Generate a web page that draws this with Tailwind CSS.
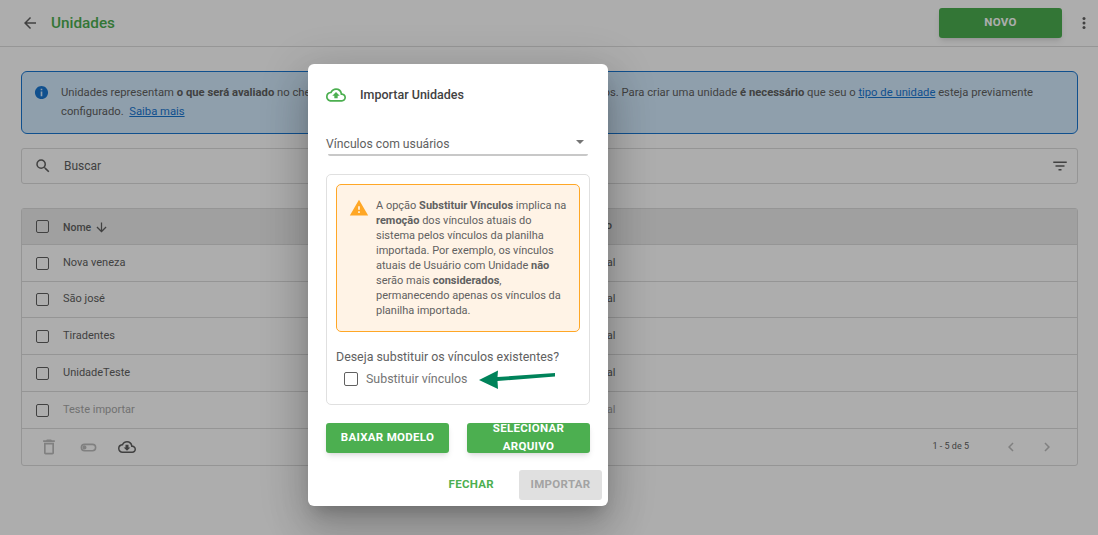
<!DOCTYPE html>
<html lang="pt-BR">
<head>
    <meta charset="UTF-8">
    <title>Unidades</title>
    <script src="https://cdn.jsdelivr.net/npm/@tailwindcss/browser@4"></script>
</head>
<body class="bg-white overflow-hidden font-['Roboto',sans-serif]">
<div class="relative w-[1098px] h-[535px] overflow-hidden">
    <!-- pagina -->
    <div class="h-[47px] border-b border-[#dedede] flex items-center pl-[21px] pr-[6px]">
        <svg class="w-[18px] h-[18px] text-[#616161]" viewBox="0 0 24 24" fill="currentColor"><path d="M20 11H7.830l5.590-5.590L12 4l-8 8 8 8 1.410-1.410L7.830 13H20v-2z"/></svg>
        <h1 class="ml-[12px] text-[15.300px] font-medium text-[#4caf50]">Unidades</h1>
        <button class="ml-auto w-[123px] h-[30px] bg-[#4caf50] text-white text-[11.500px] font-bold rounded-[3px] shadow-md mb-[1px] tracking-[.3px]">NOVO</button>
        <svg class="ml-[14px] w-4 h-4 text-[#616161]" viewBox="0 0 16 16" fill="currentColor"><circle cx="8" cy="3.500" r="1.500"/><circle cx="8" cy="8" r="1.500"/><circle cx="8" cy="12.500" r="1.500"/></svg>
    </div>
    <div class="px-[21px] pr-[20px] pt-[24px]">
        <div class="h-[63px] border border-[#1976d2] bg-[#d3ebfe] rounded-[6px] flex pl-[12px] pt-[11px] text-[11.250px] leading-[19px] text-[#616161]">
            <svg class="w-[15px] h-[15px] mt-[2px] shrink-0 text-[#1976d2]" viewBox="0 0 24 24" fill="currentColor"><path d="M12 1.500C6.200 1.500 1.500 6.200 1.500 12S6.200 22.500 12 22.500 22.500 17.800 22.500 12 17.800 1.500 12 1.500zm1.300 16.500h-2.600v-7.500h2.600V18zm0-9.500h-2.600V6h2.600v2.500z"/></svg>
            <p class="ml-[12px] whitespace-nowrap">Unidades representam <b class="font-bold">o que será avaliado</b> no checklist, como lojas, filiais, regiões, setores e os departamentos. Para criar uma unidade <b class="font-bold">é necessário</b> que seu o <a class="text-[#1976d2] underline">tipo de unidade</a> esteja previamente<br>configurado. &nbsp;<a class="text-[#1976d2] underline">Saiba mais</a></p>
        </div>
        <div class="mt-[14px] h-[36px] border border-[#dcdcdc] rounded-[3px] flex items-center pl-[12px] pr-[8px] text-[#616161]">
            <svg class="w-[18px] h-[18px]" viewBox="0 0 24 24" fill="currentColor"><path d="M15.500 14h-.790l-.280-.270A6.470 6.470 0 0 0 16 9.500 6.500 6.500 0 1 0 9.500 16c1.610 0 3.090-.590 4.230-1.570l.270.280v.790l5 4.990L20.490 19l-4.990-5zm-6 0C7.010 14 5 11.990 5 9.500S7.010 5 9.500 5 14 7.010 14 9.500 11.990 14 9.500 14z"/></svg>
            <span class="ml-[12px] text-[12px]">Buscar</span>
            <svg class="ml-auto w-[18px] h-[18px]" viewBox="0 0 24 24" fill="currentColor"><path d="M10 18h4v-2h-4v2zM3 6v2h18V6H3zm3 7h12v-2H6v2z"/></svg>
        </div>
        <div class="mt-[24px] border border-[#dcdcdc] rounded-[3px] text-[11px] text-[#616161]">
            <div class="h-[36px] bg-[#ececec] flex items-center border-b border-[#dcdcdc] font-medium">
                <span class="ml-[14px] w-[13px] h-[13px] border border-[#616161] rounded-[2px]"></span>
                <span class="ml-[14px] pt-[2px] text-[10.500px] flex items-center">Nome
                    <svg class="ml-[3px] w-[15px] h-[15px]" viewBox="0 0 24 24" fill="currentColor"><path d="M20 12l-1.410-1.410L13 16.170V4h-2v12.170l-5.580-5.590L4 12l8 8 8-8z"/></svg>
                </span>
                <span class="absolute left-[590px]">Tipo</span>
            </div>
            <div class="h-[37px] flex items-center border-b border-[#dcdcdc]">
                <span class="ml-[14px] w-[13px] h-[13px] border border-[#616161] rounded-[2px]"></span>
                <span class="ml-[14px]">Nova veneza</span>
                <span class="absolute left-[590px]">Geral</span>
            </div>
            <div class="h-[36px] flex items-center border-b border-[#dcdcdc]">
                <span class="ml-[14px] w-[13px] h-[13px] border border-[#616161] rounded-[2px]"></span>
                <span class="ml-[14px]">São josé</span>
                <span class="absolute left-[590px]">Geral</span>
            </div>
            <div class="h-[37px] flex items-center border-b border-[#dcdcdc]">
                <span class="ml-[14px] w-[13px] h-[13px] border border-[#616161] rounded-[2px]"></span>
                <span class="ml-[14px]">Tiradentes</span>
                <span class="absolute left-[590px]">Geral</span>
            </div>
            <div class="h-[37px] flex items-center border-b border-[#dcdcdc]">
                <span class="ml-[14px] w-[13px] h-[13px] border border-[#616161] rounded-[2px]"></span>
                <span class="ml-[14px]">UnidadeTeste</span>
                <span class="absolute left-[590px]">Geral</span>
            </div>
            <div class="h-[37px] flex items-center border-b border-[#dcdcdc]">
                <span class="ml-[14px] w-[13px] h-[13px] border border-[#616161] rounded-[2px]"></span>
                <span class="ml-[14px] text-[#a8a8a8]">Teste importar</span>
                <span class="absolute left-[590px] text-[#a8a8a8]">Geral</span>
            </div>
            <div class="h-[36px] flex items-center">
                <svg class="ml-[17px] w-[20px] h-[20px] text-[#bdbdbd]" viewBox="0 0 24 24" fill="currentColor"><path d="M6 19c0 1.100.900 2 2 2h8c1.100 0 2-.900 2-2V7H6v12zM8 9h8v10H8V9zm7.500-5-1-1h-5l-1 1H5v2h14V4h-3.500z"/></svg>
                <svg class="ml-[20px] w-[19px] h-[19px] text-[#bdbdbd]" viewBox="0 0 24 24" fill="currentColor"><path d="M17 7H7a5 5 0 0 0 0 10h10a5 5 0 0 0 0-10zm0 8H7a3 3 0 0 1 0-6h10a3 3 0 0 1 0 6zM7 9.500a2.500 2.500 0 1 0 0 5 2.500 2.500 0 0 0 0-5z"/></svg>
                <svg class="ml-[20px] w-[18px] h-[18px] text-[#616161]" viewBox="0 0 24 24" fill="currentColor"><path d="M19.350 10.040A7.490 7.490 0 0 0 12 4C9.110 4 6.600 5.640 5.350 8.040A5.994 5.994 0 0 0 0 14c0 3.310 2.690 6 6 6h13c2.760 0 5-2.240 5-5 0-2.640-2.050-4.780-4.650-4.960zM19 18H6c-2.210 0-4-1.790-4-4s1.790-4 4-4h.710C7.370 7.690 9.480 6 12 6c3.040 0 5.500 2.460 5.500 5.500v.500H19c1.660 0 3 1.340 3 3s-1.340 3-3 3z"/><path d="M10 9h4v3.500h2.500L12 17l-4.500-4.500H10z"/></svg>
                <span class="ml-auto text-[9px]">1 - 5 de 5</span>
                <svg class="ml-[33px] w-[18px] h-[18px] text-[#bdbdbd]" viewBox="0 0 24 24" fill="currentColor"><path d="M15.410 7.410 14 6l-6 6 6 6 1.410-1.410L10.830 12z"/></svg>
                <svg class="ml-[18px] mr-[21px] w-[18px] h-[18px] text-[#bdbdbd]" viewBox="0 0 24 24" fill="currentColor"><path d="M10 6 8.590 7.410 13.170 12l-4.580 4.590L10 18l6-6z"/></svg>
            </div>
        </div>
    </div>

    <!-- overlay -->
    <div class="absolute inset-0 bg-black/32"></div>

    <!-- modal -->
    <div class="absolute left-[308px] top-[64px] w-[300px] h-[442px] bg-white rounded-[6px] shadow-[0_11px_15px_-7px_rgba(0,0,0,.2),0_24px_38px_3px_rgba(0,0,0,.14),0_9px_46px_8px_rgba(0,0,0,.12)] px-[18px] pt-[20px]">
        <div class="h-[21px] flex items-center">
            <svg class="w-[20px] h-[20px] text-[#4caf50]" viewBox="0 0 24 24" fill="currentColor"><path d="M19.350 10.040A7.490 7.490 0 0 0 12 4C9.110 4 6.600 5.640 5.350 8.040A5.994 5.994 0 0 0 0 14c0 3.310 2.690 6 6 6h13c2.760 0 5-2.240 5-5 0-2.640-2.050-4.780-4.650-4.960zM19 18H6c-2.210 0-4-1.790-4-4s1.790-4 4-4h.710C7.370 7.690 9.480 6 12 6c3.040 0 5.500 2.460 5.500 5.500v.500H19c1.660 0 3 1.340 3 3s-1.340 3-3 3z"/><path d="M14 16v-3h2.500L12 8.500 7.500 13H10v3z"/></svg>
            <h2 class="ml-[14px] pt-[2px] text-[12.500px] font-medium text-[#424242]">Importar Unidades</h2>
        </div>
        <div class="relative mt-[30px] ml-[2px] h-[21px] w-[260px] text-[12.200px] text-[#616161] leading-[19px] border-b-2 border-[#c8c8c8] rounded-b-[2px]">
            <span class="-ml-[2px]">Vínculos com usuários</span>
            <span class="absolute right-[4px] top-[5px] border-x-[4px] border-x-transparent border-t-[4px] border-t-[#757575]"></span>
        </div>
        <div class="mt-[18px] w-[264px] h-[231px] border border-[#e0e0e0] rounded-[5px] p-[9px]">
            <div class="h-[148px] border border-[#ffa726] bg-[#fff3e6] rounded-[5px] flex pl-[12px] pr-[10px] pt-[13px]">
                <svg class="w-[20px] h-[20px] shrink-0 text-[#ffa726]" viewBox="0 0 24 24" fill="currentColor"><path d="M1 21h22L12 2 1 21zm12-3h-2v-2h2v2zm0-4h-2v-4h2v4z"/></svg>
                <p class="ml-[7px] text-[11px] leading-[15px] text-[#616161]">A opção <b class="font-bold">Substituir Vínculos</b> implica na <b class="font-bold">remoção</b> dos vínculos atuais do sistema pelos vínculos da planilha importada. Por exemplo, os vínculos atuais de Usuário com Unidade <b class="font-bold">não</b> serão mais <b class="font-bold">considerados</b>, permanecendo apenas os vínculos da planilha importada.</p>
            </div>
            <p class="mt-[15px] text-[12.400px] leading-[20px] text-[#616161]">Deseja substituir os vínculos existentes?</p>
            <div class="mt-[2px] flex items-center h-[20px] pl-[8px]">
                <span class="w-[14px] h-[14px] border border-[#616161] rounded-[2px]"></span>
                <span class="ml-[8px] text-[12.400px] text-[#757575]">Substituir vínculos</span>
            </div>
        </div>
        <div class="mt-[18px] flex justify-between w-[264px]">
            <button class="w-[123px] h-[30px] pb-[1px] bg-[#4caf50] text-white text-[11.500px] font-bold rounded-[3px] shadow-md tracking-[.3px]">BAIXAR MODELO</button>
            <button class="w-[123px] h-[30px] pb-[2px] flex items-center justify-center bg-[#4caf50] text-white text-[11.500px] font-bold rounded-[3px] shadow-md leading-[18px] tracking-[.3px]">SELECIONAR ARQUIVO</button>
        </div>
        <div class="mt-[17px] flex items-center justify-end -mr-[12px]">
            <button class="text-[11.500px] font-bold text-[#4caf50] tracking-[.3px]">FECHAR</button>
            <button class="ml-[25px] w-[83px] h-[30px] bg-[#e0e0e0] text-[#a3a3a3] text-[11.500px] font-bold rounded-[3px] tracking-[.3px]">IMPORTAR</button>
        </div>
    </div>

    <!-- seta -->
    <svg class="absolute left-[475px] top-[366px]" width="85" height="26" viewBox="0 0 85 26"><path d="M4 14 23 4.500 22.500 11 80 7 80 10.500 22.500 15 23 23z" fill="#00835a"/></svg>
</div>
</body>
</html>
